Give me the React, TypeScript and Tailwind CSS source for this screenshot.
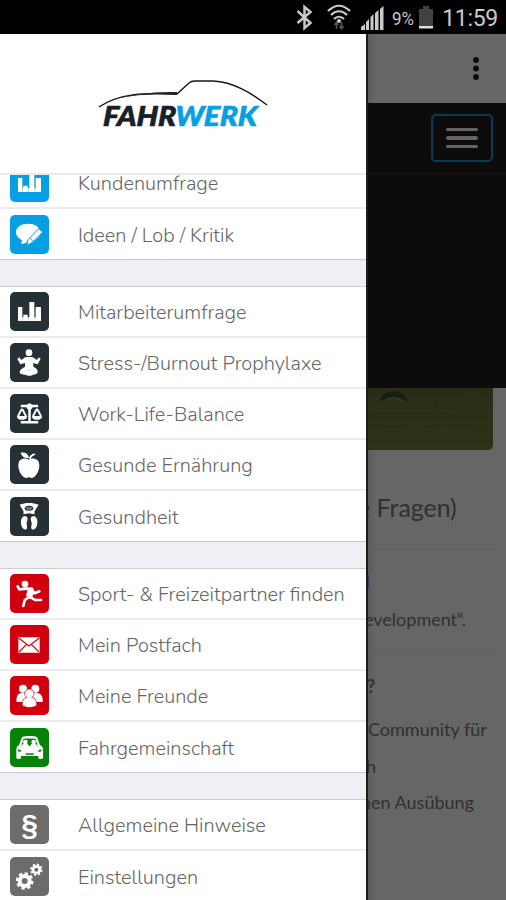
import React from "react";
import { FaBalanceScale } from "react-icons/fa";

type IconName =
  | "bars"
  | "ideas"
  | "meditation"
  | "balance"
  | "apple"
  | "scale"
  | "runner"
  | "mail"
  | "friends"
  | "car"
  | "paragraph"
  | "gears";

interface MenuItem {
  label: string;
  icon: IconName;
}

interface MenuGroup {
  color: string;
  items: MenuItem[];
}

const GROUPS: MenuGroup[] = [
  {
    color: "bg-[#069fe3]",
    items: [
      { label: "Kundenumfrage", icon: "bars" },
      { label: "Ideen / Lob / Kritik", icon: "ideas" },
    ],
  },
  {
    color: "bg-[#273035]",
    items: [
      { label: "Mitarbeiterumfrage", icon: "bars" },
      { label: "Stress-/Burnout Prophylaxe", icon: "meditation" },
      { label: "Work-Life-Balance", icon: "balance" },
      { label: "Gesunde Ernährung", icon: "apple" },
      { label: "Gesundheit", icon: "scale" },
    ],
  },
  {
    color: "bg-[#d1000f]",
    items: [
      { label: "Sport- & Freizeitpartner finden", icon: "runner" },
      { label: "Mein Postfach", icon: "mail" },
      { label: "Meine Freunde", icon: "friends" },
      { label: "Fahrgemeinschaft", icon: "car" },
    ],
  },
  {
    color: "bg-[#6c6c6c]",
    items: [
      { label: "Allgemeine Hinweise", icon: "paragraph" },
      { label: "Einstellungen", icon: "gears" },
    ],
  },
];

// All glyphs share one 117 unit grid, three units per pixel.
function Glyph({ name }: { name: IconName }) {
  if (name === "balance") return <FaBalanceScale className="size-[25px] text-white" />;
  if (name === "paragraph") {
    return (
      <span className="font-['Liberation_Sans',sans-serif] text-[30px] font-bold leading-none text-white">§</span>
    );
  }
  return (
    <svg viewBox="0 0 117 117" className="size-full" fill="#fff">
      {name === "bars" && (
        <>
          <path d="M24 45h13v31h3v-8h13v8h5V30h15v46h4V45h16v42H24z" />
          <path d="M38 76v11M55 76v11M75 50v37" stroke="#9aa3a8" strokeWidth="1.500" />
        </>
      )}
      {name === "ideas" && (
        <>
          <path d="M54 26c21 0 35 10 37 25S76 78 56 78c-5 1-8 6-15 8-4 1-8 0-8-2l4-8C25 69 18 62 18 51c0-15 16-25 36-25z" />
          <path d="M50 91l4-17 32-33 12 10-32 32z" stroke="#069fe3" strokeWidth="3" />
          <path d="M59 69l12 11" stroke="#069fe3" strokeWidth="2.500" />
        </>
      )}
      {name === "meditation" && (
        <>
          <circle cx="57" cy="29" r="10" />
          <path d="M47 42h20l14 9 5-8 6 4-9 17-13-4v11c10 5 14 9 13 17-1 5-7 7-14 7-4 4-18 4-22 0-10 0-18-2-18-8 0-7 8-11 16-16V60l-14 4-9-16 6-5 6 8z" />
          <path d="M48 84l17-4" stroke="#c6cacc" strokeWidth="2" />
        </>
      )}
      {name === "apple" && (
        <>
          <path d="M57 44c10-7 31-4 31 17 0 20-13 38-24 38-3 0-4-2-7-2s-4 2-7 2c-12 0-25-18-25-38 0-20 19-24 32-17z" />
          <path d="M32 23c14-2 22 3 25 16-14 1-21-4-25-16z" />
          <path d="M57 42c1-8 6-14 15-17l5 4c-9 3-14 7-15 14z" />
        </>
      )}
      {name === "scale" && (
        <>
          <path d="M29 23c17-7 39-7 57 0L73 44l1 8-17-3-17 3 1-8z" />
          <ellipse cx="57" cy="34" rx="13" ry="8" fill="#273035" />
          <path d="M47 33h20M51 39h13" stroke="#a9afb2" strokeWidth="3" />
          <path d="M47 58c9 2 5 14 3 19-1 5 4 16-1 20-6 3-12-3-14-9-4-9-3-26 6-30zM68 58c-9 2-5 14-3 19 1 5-4 16 1 20 6 3 12-3 14-9 4-9 3-26-6-30z" />
        </>
      )}
      {name === "runner" && (
        <>
          <circle cx="45" cy="30" r="10" />
          <path
            d="M23 37l5 9 20-2 16 1 10 13 14-6M57 68L44 79l-4 17M58 67l17 11 18 0"
            fill="none"
            stroke="#fff"
            strokeWidth="8"
            strokeLinecap="round"
            strokeLinejoin="round"
          />
          <path d="M44 41l24-1 5 12-7 20-8 4-10-12 5-15z" />
        </>
      )}
      {name === "mail" && (
        <>
          <path d="M25 37h64v46H25z" />
          <path d="M26 39l31 24 31-24M27 81l22-22M87 81L65 59" fill="none" stroke="#d1000f" strokeWidth="3.5" />
        </>
      )}
      {name === "friends" && (
        <>
          <circle cx="39" cy="38" r="12" />
          <circle cx="76" cy="38" r="12" />
          <path d="M20 78c-2-16 2-28 19-28s20 10 20 28zM57 78c0-18 4-28 20-28s23 12 21 28z" />
          <path d="M37 88c-1-18 6-25 21-25s23 7 22 25c-7 8-35 9-43 0z" stroke="#d1000f" strokeWidth="2" />
          <circle cx="58" cy="53" r="14" stroke="#d1000f" strokeWidth="2" />
          <path d="M52 64h12v5H52z" />
        </>
      )}
      {name === "car" && (
        <>
          <path
            fillRule="evenodd"
            d="M36 27c12-4 33-4 45 0l9 25c7 3 9 7 9 15v24c-3 3-12 3-14 0v-7H33v7c-3 3-11 3-14 0V67c0-8 2-12 8-15zM40 33l-6 21h49l-6-21c-10-2-27-2-37 0z"
          />
          <circle cx="46" cy="42" r="7" />
          <circle cx="71" cy="42" r="7" />
          <path d="M35 56c1-8 6-10 11-10s10 4 12 10M60 56c2-7 6-10 11-10s10 4 11 10" />
          <path d="M24 65c5-1 9 2 10 6-5 1-9 0-11-2zM94 65c-5-1-9 2-10 6 5 1 9 0 11-2zM47 76h24v4H47z" fill="#078307" />
        </>
      )}
      {name === "gears" && (
        <g fill="none" stroke="#fff">
          <circle cx="44" cy="72" r="15" strokeWidth="12" />
          <circle cx="44" cy="72" r="22" strokeWidth="9" pathLength="80" strokeDasharray="5.500 4.500" />
          <circle cx="79" cy="38" r="10" strokeWidth="8" />
          <circle cx="79" cy="38" r="15.500" strokeWidth="6" pathLength="80" strokeDasharray="5.500 4.500" />
        </g>
      )}
    </svg>
  );
}

function MenuRow({ item, color, last }: { item: MenuItem; color: string; last: boolean }) {
  const bg = item.icon === "car" ? "bg-[#078307]" : color;
  return (
    <div
      className={`flex h-[51px] shrink-0 items-center bg-white pl-2.5 ${
        last ? "border-b border-[#c9c9cd]" : "border-b-2 border-[#ececec]"
      }`}
    >
      <div className={`flex size-[39px] shrink-0 items-center justify-center overflow-hidden rounded-[5px] ${bg}`}>
        <Glyph name={item.icon} />
      </div>
      <span className="ml-[29px] whitespace-nowrap pt-[3px] font-['Nunito','Lato',sans-serif] text-[19.900px] font-light leading-6 text-[#666]">
        {item.label}
      </span>
    </div>
  );
}

function Logo() {
  return (
    <svg viewBox="0 0 180 60" className="ml-[5px] h-[60px] w-[180px]">
      <path
        d="M3 33C22 20 48 18 81 20L93 9c2-2 3-2 6-2h18c21 1 38 12 54 24"
        fill="none"
        stroke="#17151c"
        strokeWidth="1.4"
      />
      <path d="M24 24c18-5 38-6 57-6v3c-20-1-39-1-57 3z" fill="#252231" />
      <g
        fontFamily="Lato, sans-serif"
        fontWeight="900"
        fontStyle="italic"
        fontSize="27.5"
        strokeWidth="0.7"
        transform="skewX(-3) translate(3.500 0)"
      >
        <text x="6" y="52.500" textLength="73" lengthAdjust="spacingAndGlyphs" fill="#17202a" stroke="#17202a">
          FAHR
        </text>
        <text x="78" y="52.500" textLength="82" lengthAdjust="spacingAndGlyphs" fill="#079fe4" stroke="#079fe4">
          WERK
        </text>
      </g>
    </svg>
  );
}

function StatusBar() {
  return (
    <div className="flex h-[34px] shrink-0 items-center justify-end bg-black pr-2 font-['Roboto',sans-serif] text-[#c9c9c9]">
      <svg viewBox="0 0 130 34" className="h-[34px] w-[130px]" fill="none" stroke="#c9c9c9">
        <path d="M2 11l13 12-6 5V7l6 5L2 23" strokeWidth="2.5" transform="translate(-1.500 0)" />
        <path d="M31 11c7-7 15-7 22 0M34 15c5-5 11-5 16 0M37 19c3-3 7-3 10 0" strokeWidth="2.2" />
        <circle cx="42" cy="21" r="2" fill="#c9c9c9" stroke="none" />
        <path d="M39.500 22v7M37.500 25l2-3 2 3M44.500 22v7M42.500 26l2 3 2-3" stroke="#555" strokeWidth="1.500" />
        <path
          d="M64 30v-3l4-3v6zM69 30v-8l3-3v11zM73.500 30V17l3-3v16zM78 30V13l3.500-3v20zM83 30V9l3.500-3v24z"
          fill="#c9c9c9"
          stroke="none"
        />
        <text x="95" y="24.500" fontSize="18" textLength="22" lengthAdjust="spacingAndGlyphs" fill="#c9c9c9" stroke="none">
          9%
        </text>
      </svg>
      <svg viewBox="0 0 14 23" className="-ml-[8px] mr-[9px] mt-px h-[23px] w-[14px]">
        <path d="M4 0h6v3h4v17H0V3h4z" fill="#424242" />
        <path d="M0 20h14v2.500H0z" fill="#ddd" />
      </svg>
      <span className="pt-[3px] text-[23px] leading-none tracking-[-0.3px]">11:59</span>
    </div>
  );
}

// The part of the page that stays visible beside the open drawer.
function PageBehind() {
  return (
    <div className="flex min-w-0 flex-1 flex-col overflow-hidden border-l-2 border-[#1c1c1c] bg-[#666] bg-linear-to-r from-[#5d5d5d] to-[#666] to-[8px] font-['Lato',sans-serif] text-[#303030]">
      <div className="flex h-[69px] shrink-0 items-center justify-end pr-[27px]">
        <svg viewBox="0 0 6 24" className="h-6 w-1.5" fill="#0c0c0c">
          <circle cx="3" cy="3" r="2.900" />
          <circle cx="3" cy="11.500" r="2.900" />
          <circle cx="3" cy="20" r="2.900" />
        </svg>
      </div>
      <div className="flex h-[71px] shrink-0 items-center justify-end border-b border-[#171416] bg-[#0e0b0d] pr-[13px]">
        <div className="flex h-12 w-[62px] flex-col items-center justify-center gap-[5px] rounded-[5px] border-2 border-[#073c54]">
          <span className="h-[3.500px] w-8 rounded-sm bg-[#656365]" />
          <span className="h-[3.500px] w-8 rounded-sm bg-[#656365]" />
          <span className="h-[3.500px] w-8 rounded-sm bg-[#656365]" />
        </div>
      </div>
      <div className="h-[214px] shrink-0 bg-[#0e0b0d]" />
      <div className="mr-[13px] h-[62px] shrink-0 overflow-hidden rounded-br-[5px] bg-linear-to-b from-[#282d17] to-[#2d3319]">
        <svg viewBox="0 0 125 62" className="h-[62px] w-[125px]" fill="none">
          <path d="M11 14c4-14 24-15 29 0-8-6-20-6-29 0z" fill="#181e11" />
          <path d="M16 13c6-4 12-4 18 0" stroke="#333a24" strokeWidth="2" />
          <path d="M0 21l30 2 31-1 62 3M0 42l47-1 76 3" stroke="#30361b" strokeWidth="1" />
          <path d="M107 16l7 1M67 15l2 6M101 8l6-1" stroke="#252a16" strokeWidth="2" />
        </svg>
      </div>
      <h2 className="-ml-[11px] mt-[41px] whitespace-nowrap text-[24.900px] leading-8">e Fragen)</h2>
      <div className="mr-[10px] mt-[26px] border-t border-[#5f5f5f]" />
      <p className="-ml-[3px] mt-5 text-[19px] font-bold leading-6">l</p>
      <p className="-ml-[4px] mt-[13px] whitespace-nowrap text-[18px] leading-6">evelopment“.</p>
      <div className="mr-[10px] mt-[20px] border-t border-[#626262]" />
      <p className="-ml-px mt-[22px] text-[18px] font-bold leading-6">?</p>
      <div className="mt-[13px] whitespace-nowrap text-[18px] leading-[36.500px]">
        <p>Community für</p>
        <p className="-ml-[2px]">h</p>
        <p className="-ml-[7px]">nen Ausübung</p>
      </div>
    </div>
  );
}

export default function App() {
  return (
    <div className="flex h-[900px] w-[506px] flex-col overflow-hidden bg-[#666]">
      <StatusBar />
      <div className="flex min-h-0 flex-1">
        <aside className="flex w-[366px] shrink-0 flex-col overflow-hidden bg-[#efeff4]">
          <div className="flex h-[141px] shrink-0 items-center justify-center border-b-2 border-[#e9e9e9] bg-white">
            <Logo />
          </div>
          <nav className="flex min-h-0 flex-1 flex-col overflow-hidden">
            <div className="-mt-[17px] flex flex-col gap-[27px]">
              {GROUPS.map((group, index) => (
                <div key={index} className="flex flex-col shadow-[0_-1px_0_#cdcdd1]">
                  {group.items.map((item, i) => (
                    <MenuRow
                      key={item.label}
                      item={item}
                      color={group.color}
                      last={i === group.items.length - 1}
                    />
                  ))}
                </div>
              ))}
            </div>
          </nav>
        </aside>
        <PageBehind />
      </div>
    </div>
  );
}
